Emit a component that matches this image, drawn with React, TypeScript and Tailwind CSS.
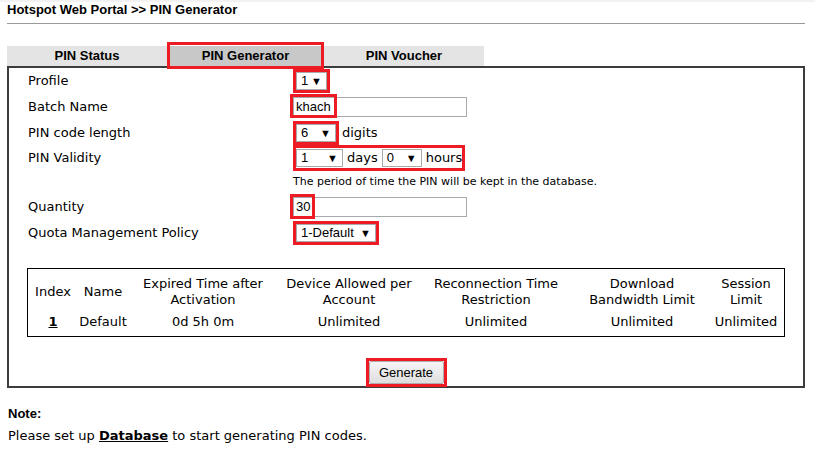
import React from 'react';

function Caret() {
  return <span className="text-[11px] leading-none">▼</span>;
}

function Select({ value, w }: { value: string; w: string }) {
  return (
    <span
      className={`inline-flex h-[18px] items-center justify-between border border-[#a9a9a9] bg-white pl-[4px] pr-[4px] font-['Liberation_Sans'] text-[13px] ${w}`}
    >
      <span>{value}</span>
      <Caret />
    </span>
  );
}

function Mark({ children, className = '' }: { children: React.ReactNode; className?: string }) {
  return (
    <span className={`inline-flex items-center border-[3px] border-[#ed1c24] ${className}`}>{children}</span>
  );
}

const cols = [
  { h: ['Index'], v: '1', w: 'w-[50px]', link: true },
  { h: ['Name'], v: 'Default', w: 'w-[50px]' },
  { h: ['Expired Time after', 'Activation'], v: '0d 5h 0m', w: 'w-[150px]' },
  { h: ['Device Allowed per', 'Account'], v: 'Unlimited', w: 'w-[142px]' },
  { h: ['Reconnection Time', 'Restriction'], v: 'Unlimited', w: 'w-[152px]' },
  { h: ['Download', 'Bandwidth Limit'], v: 'Unlimited', w: 'w-[140px]' },
  { h: ['Session', 'Limit'], v: 'Unlimited', w: 'w-[68px]' },
];

export default function App() {
  return (
    <div className="h-[457px] w-[815px] overflow-hidden bg-white font-['DejaVu_Sans',sans-serif] text-[13px] text-black">
      <div className="h-[2px] bg-[#f2f2f2]" />
      <div className="px-[7px]">
        <div className="h-[15px] font-['Liberation_Sans',sans-serif] text-[13px] font-bold leading-[15px]">
          Hotspot Web Portal &gt;&gt; PIN Generator
        </div>
        <div className="mt-[6px] mr-[3px] border-t border-[#9a9a9a]" />

        <div className="mt-[22px] flex font-['Liberation_Sans',sans-serif] text-[13px] font-bold">
          <div className="flex h-[20px] w-[160px] items-center justify-center bg-[#e4e4e4]">PIN Status</div>
          <div className="relative flex h-[20px] w-[157px] items-center justify-center bg-[#c8c8c8]">
            PIN Generator
            <span className="absolute -top-[4px] -bottom-[3px] left-0 right-0 border-[3px] border-[#ed1c24]" />
          </div>
          <div className="flex h-[20px] w-[160px] items-center justify-center bg-[#e4e4e4]">PIN Voucher</div>
        </div>

        <div className="h-[322px] w-[798px] border-2 border-[#3c3c3c]">
          <div className="grid grid-cols-[265px_1fr] pl-[19px]">
            <div className="flex h-[26px] items-center">Profile</div>
            <div className="flex h-[26px] items-center">
              <Mark>
                <Select value="1" w="w-[31px]" />
              </Mark>
            </div>

            <div className="flex h-[26px] items-center">Batch Name</div>
            <div className="relative flex h-[26px] items-center">
              <span className="flex h-[20px] w-[174px] items-center border border-[#a9a9a9] pl-[2px] font-['Liberation_Sans'] text-[13px]">
                khach
              </span>
              <span className="absolute -left-[3px] top-[0px] h-[24px] w-[47px] border-[3px] border-[#ed1c24]" />
            </div>

            <div className="flex h-[26px] items-center">PIN code length</div>
            <div className="flex h-[26px] items-center gap-[3px]">
              <Mark>
                <Select value="6" w="w-[40px]" />
              </Mark>
              <span>digits</span>
            </div>

            <div className="flex h-[24px] items-center">PIN Validity</div>
            <div className="flex h-[24px] items-center">
              <Mark className="gap-[4px]">
                <Select value="1" w="w-[47px]" />
                <span>days</span>
                <Select value="0" w="w-[40px]" />
                <span>hours</span>
              </Mark>
            </div>

            <div className="h-[24px]" />
            <div className="flex h-[24px] items-center text-[11px]">
              The period of time the PIN will be kept in the database.
            </div>

            <div className="flex h-[26px] items-center">Quantity</div>
            <div className="relative flex h-[26px] items-center">
              <span className="flex h-[20px] w-[174px] items-center border border-[#a9a9a9] pl-[2px] font-['Liberation_Sans'] text-[13px]">
                30
              </span>
              <span className="absolute -left-[3px] top-[0px] h-[25px] w-[25px] border-[3px] border-[#ed1c24]" />
            </div>

            <div className="flex h-[26px] items-center">Quota Management Policy</div>
            <div className="flex h-[26px] items-center">
              <Mark>
                <Select value="1-Default" w="w-[80px]" />
              </Mark>
            </div>
          </div>

          <div className="mt-[22px] ml-[18px] w-[758px] border border-black pt-[7px] pb-[6px]">
            <div className="flex text-center leading-[16px]">
              {cols.map((c) => (
                <div key={c.h.join()} className={`${c.w} flex flex-col`}>
                  <div className="flex h-[32px] flex-col justify-center">
                    {c.h.map((l) => (
                      <div key={l}>{l}</div>
                    ))}
                  </div>
                  <div className="mt-[6px]">
                    {c.link ? <span className="font-bold underline">{c.v}</span> : c.v}
                  </div>
                </div>
              ))}
            </div>
          </div>

          <div className="mt-[21px] flex justify-center">
            <span className="inline-flex border-[3px] border-[#ed1c24] p-0">
              <button className="h-[23px] w-[75px] rounded-[2px] border border-[#adadad] bg-gradient-to-b from-[#f6f6f6] to-[#dedede] font-['Liberation_Sans'] text-[13px]">
                Generate
              </button>
            </span>
          </div>
        </div>

        <div className="mt-[16px] pl-[1px] font-['Liberation_Sans',sans-serif] text-[13px] font-bold">Note:</div>
        <div className="mt-[2px] pl-[1px] text-[13px]">
          Please set up <span className="font-bold underline">Database</span> to start generating PIN codes.
        </div>
      </div>
    </div>
  );
}
